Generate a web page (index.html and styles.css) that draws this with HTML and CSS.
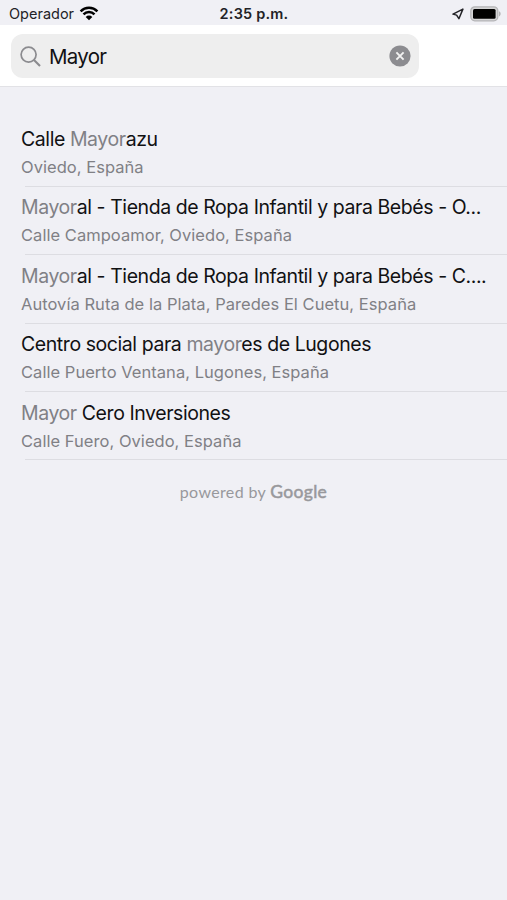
FILE: index.html
```html
<!DOCTYPE html>
<html lang="es">
<head>
    <meta charset="UTF-8">
    <meta name="viewport" content="width=device-width, initial-scale=1.0">
    <title>Buscar dirección</title>
    <link rel="stylesheet" href="styles.css">
</head>
<body>
    <div class="app-container">
        <!-- Barra de estado -->
        <div class="status-bar">
            <div class="carrier">
                <span class="carrier-name">Operador</span>
                <svg class="wifi" width="20" height="15" viewBox="0 0 20 15">
                    <path d="M1.6 5.3a12 12 0 0 1 16.8 0M4.5 8.3a7.8 7.8 0 0 1 11 0" fill="none" stroke="#000" stroke-width="2.5"/>
                    <path d="M10 14.2L6.7 10.9a4.7 4.7 0 0 1 6.6 0z" fill="#000"/>
                </svg>
            </div>
            <div class="time">2:35 p.m.</div>
            <div class="right-items">
                <svg class="location" width="12" height="12" viewBox="0 0 12 12">
                    <path d="M10.9 1.1L1 6.1l3.6 1 2.3 3.6z" fill="none" stroke="#222226" stroke-width="1.5" stroke-linejoin="round"/>
                </svg>
                <svg class="battery" width="31" height="16" viewBox="0 0 31 16">
                    <rect x=".8" y=".8" width="27" height="14" rx="4" fill="#d4d4d5" stroke="#b4b4b6" stroke-width="1.3"/>
                    <rect x="3" y="3" width="22.6" height="9.8" rx="1.5" fill="#000"/>
                    <path d="M29 5.2c2.2.8 2.2 4.4 0 5.2z" fill="#b4b4b6"/>
                </svg>
            </div>
        </div>

        <!-- Buscador -->
        <div class="search-bar">
            <div class="search-field">
                <svg class="search-icon" width="21" height="21" viewBox="0 0 21 21" fill="none" stroke="#8b8b8f" stroke-width="1.7">
                    <circle cx="8.6" cy="8.6" r="7.5"/>
                    <path d="M14 14l6 6" stroke-width="2.1"/>
                </svg>
                <span class="search-text">Mayor</span>
                <svg class="clear-icon" width="22" height="22" viewBox="0 0 22 22">
                    <circle cx="11" cy="11" r="10.6" fill="#8c8c90"/>
                    <path d="M7.4 7.4l7.2 7.2M14.6 7.4l-7.2 7.2" stroke="#f2f2f2" stroke-width="1.9"/>
                </svg>
            </div>
        </div>

        <!-- Resultados -->
        <ul class="results">
            <li class="result">
                <div class="result-title">Calle <span class="match">Mayor</span>azu</div>
                <div class="result-address">Oviedo, España</div>
            </li>
            <li class="result">
                <div class="result-title"><span class="match">Mayor</span>al - Tienda de Ropa Infantil y para Bebés - O...</div>
                <div class="result-address">Calle Campoamor, Oviedo, España</div>
            </li>
            <li class="result">
                <div class="result-title"><span class="match">Mayor</span>al - Tienda de Ropa Infantil y para Bebés - C....</div>
                <div class="result-address">Autovía Ruta de la Plata, Paredes El Cuetu, España</div>
            </li>
            <li class="result">
                <div class="result-title">Centro social para <span class="match">mayor</span>es de Lugones</div>
                <div class="result-address">Calle Puerto Ventana, Lugones, España</div>
            </li>
            <li class="result">
                <div class="result-title"><span class="match">Mayor</span> Cero Inversiones</div>
                <div class="result-address">Calle Fuero, Oviedo, España</div>
            </li>
        </ul>

        <div class="attribution">powered by <span class="brand">Google</span></div>
    </div>
</body>
</html>
```
FILE: styles.css
```css
* {
    margin: 0;
    padding: 0;
    box-sizing: border-box;
}

body {
    font-family: Inter, "Liberation Sans", Arial, sans-serif;
    background-color: #f0f0f5;
    color: #111113;
    height: 100vh;
    overflow: hidden;
}

svg {
    display: block;
    flex: none;
}

/* Barra de estado */
.status-bar {
    height: 25px;
    display: grid;
    grid-template-columns: 1fr auto 1fr;
    align-items: center;
    padding: 2px 8px 0 9px;
    font-size: 14.5px;
    line-height: 22px;
    color: #222226;
}

.carrier,
.right-items {
    display: flex;
    align-items: center;
}

.carrier {
    gap: 5px;
}

.right-items {
    justify-content: flex-end;
    gap: 6px;
    margin-right: -2px;
}

.time {
    font-weight: 600;
    letter-spacing: 0.2px;
}

/* Buscador */
.search-bar {
    height: 62px;
    padding: 9px 88px 8px 11px;
    background-color: #fff;
    border-bottom: 1px solid #e2e2e6;
}

.search-field {
    height: 44px;
    display: flex;
    align-items: center;
    padding: 0 8px 0 9px;
    border-radius: 12px;
    background-color: #eee;
}

.search-text {
    flex: 1;
    margin-left: 8px;
    font-size: 20.5px;
    letter-spacing: -0.7px;
}

/* Resultados */
.results {
    list-style: none;
    padding-top: 31.5px;
}

.result {
    height: 68.4px;
    padding: 7.5px 0 0 21px;
    white-space: nowrap;
    background: linear-gradient(#dddde2, #dddde2) 25px 100% / 100% 1px no-repeat;
}

.result-title {
    font-size: 19.5px;
    line-height: 26px;
    letter-spacing: -0.43px;
}

.match {
    color: #808085;
}

.result-address {
    margin-top: 2px;
    font-size: 16.5px;
    line-height: 26px;
    letter-spacing: 0.04px;
    color: #808085;
}

.attribution {
    margin-top: 19.5px;
    text-align: center;
    font-family: Lato, sans-serif;
    font-size: 16px;
    line-height: 24px;
    letter-spacing: 0.35px;
    color: #98989c;
}

.brand {
    font-size: 17.5px;
    -webkit-text-stroke: 0.5px #98989c;
}
```
